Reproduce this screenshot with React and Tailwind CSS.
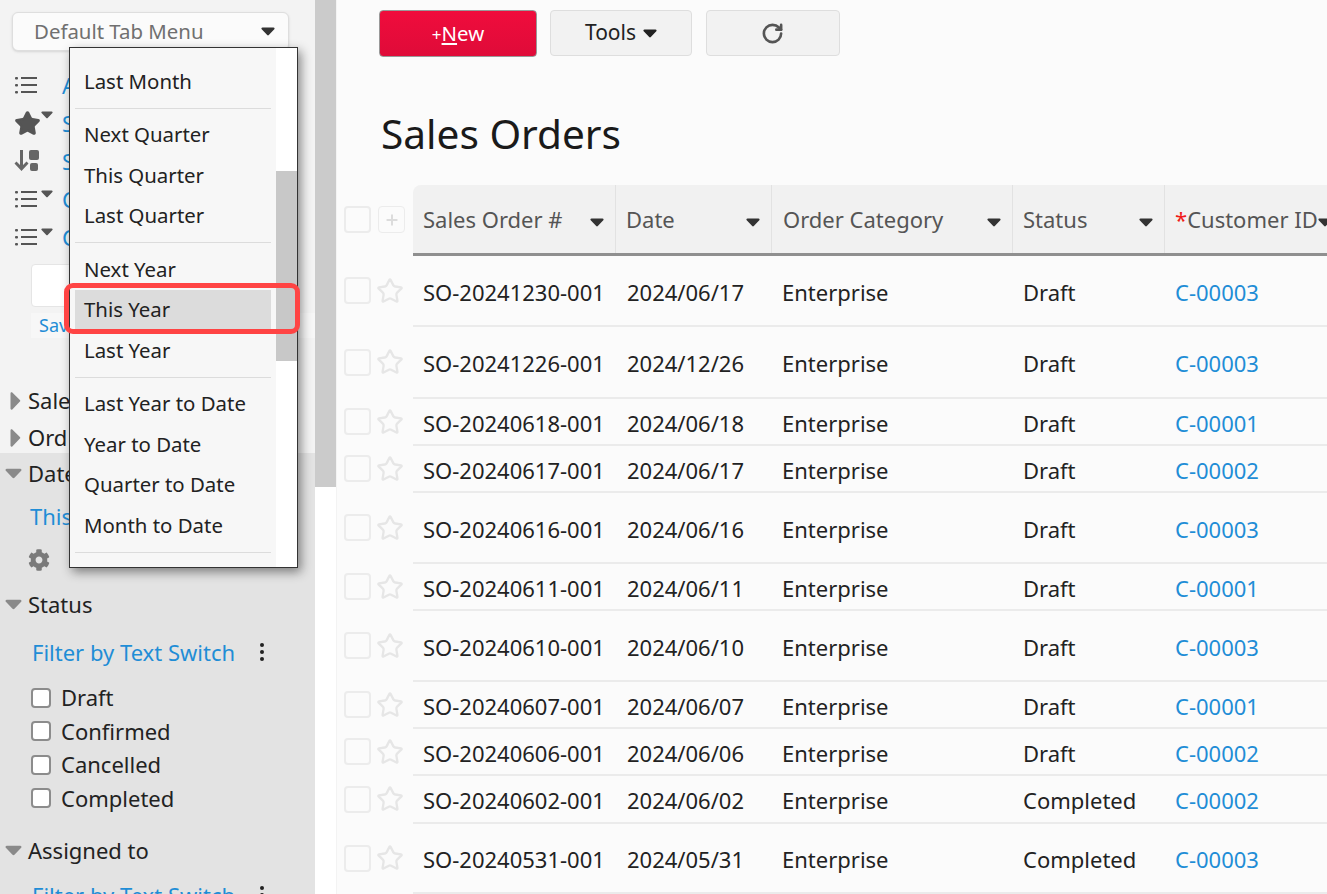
import React from "react";
import { Star, Plus, RotateCw } from "lucide-react";
import { FaCog } from "react-icons/fa";

const rows = [
  { no: "SO-20241230-001", date: "2024/06/17", status: "Draft", cust: "C-00003", h: "h-[71px]" },
  { no: "SO-20241226-001", date: "2024/12/26", status: "Draft", cust: "C-00003", h: "h-[72px]" },
  { no: "SO-20240618-001", date: "2024/06/18", status: "Draft", cust: "C-00001", h: "h-[47px]" },
  { no: "SO-20240617-001", date: "2024/06/17", status: "Draft", cust: "C-00002", h: "h-[47px]" },
  { no: "SO-20240616-001", date: "2024/06/16", status: "Draft", cust: "C-00003", h: "h-[71px]" },
  { no: "SO-20240611-001", date: "2024/06/11", status: "Draft", cust: "C-00001", h: "h-[47px]" },
  { no: "SO-20240610-001", date: "2024/06/10", status: "Draft", cust: "C-00003", h: "h-[71px]" },
  { no: "SO-20240607-001", date: "2024/06/07", status: "Draft", cust: "C-00001", h: "h-[47px]" },
  { no: "SO-20240606-001", date: "2024/06/06", status: "Draft", cust: "C-00002", h: "h-[47px]" },
  { no: "SO-20240602-001", date: "2024/06/02", status: "Completed", cust: "C-00002", h: "h-[48px]" },
  { no: "SO-20240531-001", date: "2024/05/31", status: "Completed", cust: "C-00003", h: "h-[70px]" },
];

const menuGroups = [
  ["Last Month"],
  ["Next Quarter", "This Quarter", "Last Quarter"],
  ["Next Year", "This Year", "Last Year"],
  ["Last Year to Date", "Year to Date", "Quarter to Date", "Month to Date"],
];

const Caret = ({ className = "" }) => (
  <svg viewBox="0 0 14 9" className={className} fill="currentColor">
    <path d="M1.5 0.5h11c1 0 1.4 1 .8 1.7L7.8 8c-.4.5-1.2.5-1.6 0L.7 2.2C.1 1.5.5.5 1.5.5z" />
  </svg>
);

const CaretRight = () => (
  <svg viewBox="0 0 10 18" className="w-[11px] h-[18px] text-[#8a8a8a]" fill="currentColor">
    <path d="M0 1.5C0 .4 1 0 1.800.6l7.600 7.300c.5.500.5 1.200 0 1.700L1.800 17.400C1 18 0 17.600 0 16.500z" />
  </svg>
);

const ListIcon = () => (
  <svg viewBox="0 0 24 20" className="w-[24px] h-[20px] text-[#555]" fill="currentColor">
    <rect x="1" y="2" width="3" height="2.500" rx="1" />
    <rect x="1" y="9" width="3" height="2.500" rx="1" />
    <rect x="1" y="16" width="3" height="2.500" rx="1" />
    <rect x="7" y="2" width="16" height="2" />
    <rect x="7" y="9" width="16" height="2" />
    <rect x="7" y="16" width="16" height="2" />
  </svg>
);

const SortIcon = () => (
  <svg viewBox="0 0 26 24" className="w-[26px] h-[24px] text-[#666]" fill="currentColor">
    <path d="M6 1h3v15l3.500-3.500 2 2L7.500 22 .5 14.500l2-2L6 16z" />
    <rect x="15" y="1" width="10" height="10" rx="2" />
    <rect x="16" y="14" width="8" height="8" rx="2" />
  </svg>
);

const Checkbox = () => (
  <span className="block w-[20px] h-[20px] rounded-[4px] border-2 border-[#8c8c8c] bg-white" />
);

const IconRow = ({ icon, caret, label }) => (
  <div className="h-[38px] flex items-center pl-[14px]">
    <span className="relative w-[48px] flex items-center shrink-0">
      {icon}
      {caret && <Caret className="absolute left-[27px] top-[1px] w-[12px] h-[8px] text-[#555]" />}
    </span>
    <span className="text-[#1f8dd6] text-[22px]">{label}</span>
  </div>
);

const FilterSwitch = ({ className = "" }) => (
  <div className={`h-[48px] flex items-center pl-[32px] gap-[25px] ${className}`}>
    <span className="text-[#1f8dd6] text-[22px]">Filter by Text Switch</span>
    <span className="flex flex-col gap-[3px]">
      <span className="w-[4px] h-[4px] rounded-full bg-[#222]" />
      <span className="w-[4px] h-[4px] rounded-full bg-[#222]" />
      <span className="w-[4px] h-[4px] rounded-full bg-[#222]" />
    </span>
  </div>
);

const Sidebar = () => (
  <aside className="w-[315px] shrink-0 h-full bg-[#f3f3f3] overflow-hidden">
    <div className="pl-[12px] pr-[26px] pt-[12px] pb-[15px]">
      <div className="h-[39px] rounded-[6px] bg-[#fbfbfb] border border-[#dedede] flex items-center justify-between pl-[21px] pr-[13px] shadow-sm">
        <span className="text-[#707070] text-[20.400px]">Default Tab Menu</span>
        <Caret className="w-[14px] h-[9px] text-[#333]" />
      </div>
    </div>
    <IconRow icon={<ListIcon />} label="A" />
    <IconRow
      icon={<Star className="w-[27px] h-[27px] text-[#555]" fill="currentColor" />}
      caret
      label="S"
    />
    <IconRow icon={<SortIcon />} label="S" />
    <IconRow icon={<ListIcon />} caret label="C" />
    <IconRow icon={<ListIcon />} caret label="C" />
    <div className="pl-[31px] pt-[8px] pb-[7px]">
      <div className="h-[43px] w-[120px] bg-white border border-[#e5e5e5] rounded-[4px]" />
      <div className="h-[25px] mt-[6px] flex items-center pl-[8px] bg-[#f7f7f7] text-[#1f8dd6] text-[18px]">Sav</div>
    </div>
    <div className="h-[37px] mt-[37px] flex items-center pl-[10px] gap-[7px] text-[22px] text-[#222]">
      <CaretRight />
      <span>Sale</span>
    </div>
    <div className="h-[37px] flex items-center pl-[10px] gap-[7px] text-[22px] text-[#222]">
      <CaretRight />
      <span>Ord</span>
    </div>
    <div className="h-[441px] bg-[#e3e3e3] mt-[-3px]">
      <div className="h-[40px] flex items-center pl-[5px] gap-[6px] text-[22px] text-[#222]">
        <Caret className="w-[17px] h-[11px] text-[#8a8a8a]" />
        <span>Date</span>
      </div>
      <div className="h-[47px] flex items-center pl-[30px] text-[#1f8dd6] text-[22px]">This</div>
      <div className="h-[40px] flex items-center pl-[28px]">
        <FaCog className="w-[22px] h-[22px] text-[#7a7a7a]" />
      </div>
      <div className="h-[44px] mt-[2px] flex items-center pl-[5px] gap-[6px] text-[22px] text-[#222]">
        <Caret className="w-[17px] h-[11px] text-[#8a8a8a]" />
        <span>Status</span>
      </div>
      <FilterSwitch className="mt-[2px]" />
      <div className="pt-[5px] flex flex-col">
        {["Draft", "Confirmed", "Cancelled", "Completed"].map((s) => (
          <label key={s} className="h-[33.500px] flex items-center pl-[31px] gap-[10px] text-[22px] text-[#222]">
            <Checkbox />
            <span>{s}</span>
          </label>
        ))}
      </div>
      <div className="h-[44px] mt-[13px] flex items-center pl-[5px] gap-[6px] text-[22px] text-[#222]">
        <Caret className="w-[17px] h-[11px] text-[#8a8a8a]" />
        <span>Assigned to</span>
      </div>
      <FilterSwitch className="mt-[-1px]" />
    </div>
  </aside>
);

const DropdownMenu = () => (
  <div className="absolute left-[69px] top-[47px] w-[229px] h-[521px] bg-white border border-[#333] shadow-[3px_4px_10px_rgba(0,0,0,0.45)] flex overflow-hidden">
    <div className="w-[206px] bg-[#f7f7f7] px-[5px] pt-[13px] shrink-0 h-full overflow-hidden">
      {menuGroups.map((group, i) => (
        <div key={i} className="border-b border-[#dcdcdc] pb-[6px] mb-[6px]">
          {group.map((item) => (
            <div
              key={item}
              className={`h-[40.500px] flex items-center pl-[9px] text-[20.400px] text-[#222] ${
                item === "This Year" ? "bg-[#dcdcdc]" : ""
              }`}
            >
              {item}
            </div>
          ))}
        </div>
      ))}
    </div>
    <div className="flex-1 pt-[123px]">
      <div className="h-[190px] bg-[#c8c8c8]" />
    </div>
  </div>
);

const headers = [
  { label: "Sales Order #", cls: "w-[203px] pl-[10px]" },
  { label: "Date", cls: "w-[156px] pl-[10px]" },
  { label: "Order Category", cls: "w-[241px] pl-[11px]" },
  { label: "Status", cls: "w-[152px] pl-[10px]" },
];

const Table = () => (
  <div className="mt-[24px] w-[1100px]">
    <div className="flex">
      <div className="w-[76px] shrink-0 pl-[7px] pt-[21px] flex gap-[7px]">
        <span className="block w-[27px] h-[27px] rounded-[4px] border-2 border-[#ececec]" />
        <span className="flex items-center justify-center w-[27px] h-[27px] rounded-[4px] border border-[#ececec]">
          <Plus className="w-[16px] h-[16px] text-[#dcdcdc]" strokeWidth={3} />
        </span>
      </div>
      <div className="flex-1 flex h-[71px] bg-[#f1f1f1] border-b-[3px] border-[#8f8f8f] rounded-tl-[8px]">
        {headers.map((h) => (
          <div
            key={h.label}
            className={`${h.cls} shrink-0 border-r border-[#e2e2e2] pr-[11px] flex items-center justify-between text-[#555] text-[22px]`}
          >
            <span>{h.label}</span>
            <Caret className="w-[14px] h-[9px] text-[#333] mt-[6px]" />
          </div>
        ))}
        <div className="pl-[10px] flex items-center text-[#555] text-[22px]">
          <span className="text-[#f01a1a]">*</span>
          <span>Customer ID</span>
          <Caret className="w-[14px] h-[9px] text-[#333] mt-[6px]" />
        </div>
      </div>
    </div>
    {rows.map((r) => (
      <div key={r.no} className={`flex ${r.h}`}>
        <div className="w-[76px] shrink-0 pl-[7px] flex items-center gap-[5px] pb-[2px]">
          <span className="block w-[27px] h-[27px] rounded-[4px] border-2 border-[#ececec]" />
          <Star className="w-[28px] h-[28px] text-[#e6e6e6]" strokeWidth={2} />
        </div>
        <div className="flex-1 flex items-center border-b-2 border-[#ebebeb] pt-[3px] text-[22px] text-[#222]">
          <span className="w-[203px] shrink-0 pl-[10px]">{r.no}</span>
          <span className="w-[156px] shrink-0 pl-[11px]">{r.date}</span>
          <span className="w-[241px] shrink-0 pl-[10px]">Enterprise</span>
          <span className="w-[152px] shrink-0 pl-[10px]">{r.status}</span>
          <span className="pl-[10px] text-[#1f8dd6]">{r.cust}</span>
        </div>
      </div>
    ))}
  </div>
);

const App = () => (
  <div className="relative w-[1327px] h-[894px] overflow-hidden flex bg-white font-['Open_Sans',sans-serif]">
    <Sidebar />
    <div className="w-[21px] shrink-0 h-full bg-white">
      <div className="h-[487px] bg-[#cbcbcb]" />
    </div>
    <main className="flex-1 h-full bg-[#fbfbfb] border-l border-[#f3f3f3] overflow-hidden">
      <div className="pl-[42px] pt-[10px] flex items-start gap-[13px]">
        <button className="w-[158px] h-[47px] rounded-[4px] border border-[#999] bg-gradient-to-b from-[#f00c3c] to-[#df0b39] text-white text-[20.400px]">
          <span className="text-[17px]">+</span>
          <span className="underline underline-offset-2">N</span>ew
        </button>
        <button className="w-[142px] h-[46px] rounded-[4px] border border-[#dedede] bg-[#f2f2f2] text-[#222] text-[21px] flex items-center justify-center gap-[7px]">
          Tools
          <Caret className="w-[14px] h-[9px] text-[#222]" />
        </button>
        <button className="w-[134px] h-[46px] ml-[1px] rounded-[4px] border border-[#dedede] bg-[#f2f2f2] flex items-center justify-center pr-[2px]">
          <RotateCw className="w-[23px] h-[23px] text-[#555]" strokeWidth={2.750} />
        </button>
      </div>
      <h1 className="pl-[44px] mt-[49px] h-[55px] leading-[55px] text-[40.600px] text-[#1a1a1a]">Sales Orders</h1>
      <Table />
    </main>
    <DropdownMenu />
    <div className="absolute left-[64px] top-[283px] w-[236px] h-[51px] border-[5px] border-[#ff4444] rounded-[9px]" />
  </div>
);

export default App;
